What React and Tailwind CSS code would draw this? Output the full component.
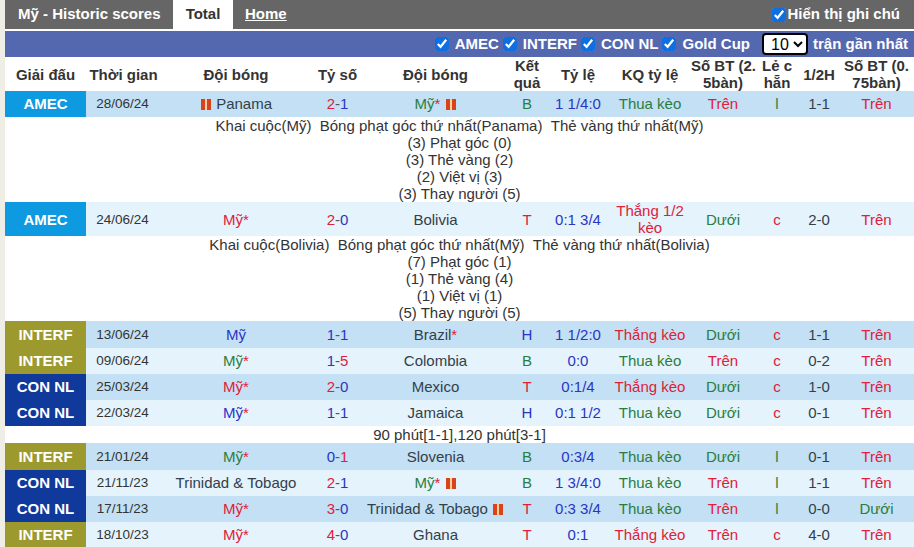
const RED = 'text-[#e0203a]';
const BLUE = 'text-[#2a35c4]';
const GREEN = 'text-[#2a7d3f]';
const DARK = 'text-[#33404a]';

const ROW26 = 'h-[26px] [&>td]:pb-[2px]';

const Card = () => (
  <span className="inline-block align-[-1px] w-[10px] h-[11px] bg-[#d9431a] relative mx-[1px]">
    <span className="absolute left-[4px] top-0 w-[2px] h-full bg-[#f9cfa0]" />
  </span>
);

const COLS = [81, 75, 150, 53, 143, 40, 62, 82, 64, 44, 40, 75];

const HEAD = [
  'Giải đấu', 'Thời gian', 'Đội bóng', 'Tỷ số', 'Đội bóng', 'Kết\nquả', 'Tỷ lệ', 'KQ tỷ lệ',
  'Số BT (2.\n5bàn)', 'Lẻ c\nhẵn', '1/2H', 'Số BT (0.\n75bàn)',
];

const LEAGUE = {
  AMEC: 'bg-[#0e9ae0]',
  INTERF: 'bg-[#9c9a2f]',
  'CON NL': 'bg-[#0f3a9b]',
};

const rows = [
  { lg: 'AMEC', date: '28/06/24', t1: 'Panama', t1c: DARK, card1: true, s: ['2', '1'], sc: [RED, BLUE], t2: 'Mỹ', star2: true, t2c: GREEN, card2: true, r: 'B', rc: GREEN, o: '1 1/4:0', k: 'Thua kèo', kc: GREEN, bt: 'Trên', btc: RED, lc: 'l', lcc: GREEN, h: '1-1', b2: 'Trên', b2c: RED, bg: 'bg-[#c3e0f4]', h_: ROW26,
    detail: ['Khai cuộc(Mỹ)\u00a0\u00a0Bóng phạt góc thứ nhất(Panama)\u00a0\u00a0Thẻ vàng thứ nhất(Mỹ)', '(3) Phạt góc (0)', '(3) Thẻ vàng (2)', '(2) Việt vị (3)', '(3) Thay người (5)'] },
  { lg: 'AMEC', date: '24/06/24', t1: 'Mỹ', star1: true, t1c: RED, s: ['2', '0'], sc: [RED, BLUE], t2: 'Bolivia', t2c: DARK, r: 'T', rc: RED, o: '0:1 3/4', k: 'Thắng 1/2 kèo', kc: RED, bt: 'Dưới', btc: GREEN, lc: 'c', lcc: RED, h: '2-0', b2: 'Trên', b2c: RED, bg: 'bg-[#e4f3fc]', h_: 'h-[34px]',
    detail: ['Khai cuộc(Bolivia)\u00a0\u00a0Bóng phạt góc thứ nhất(Mỹ)\u00a0\u00a0Thẻ vàng thứ nhất(Bolivia)', '(7) Phạt góc (1)', '(1) Thẻ vàng (4)', '(1) Việt vị (1)', '(5) Thay người (5)'] },
  { lg: 'INTERF', date: '13/06/24', t1: 'Mỹ', t1c: BLUE, s: ['1', '1'], sc: [BLUE, BLUE], t2: 'Brazil', star2: true, t2c: DARK, r: 'H', rc: BLUE, o: '1 1/2:0', k: 'Thắng kèo', kc: RED, bt: 'Dưới', btc: GREEN, lc: 'c', lcc: RED, h: '1-1', b2: 'Trên', b2c: RED, bg: 'bg-[#c3e0f4]', h_: 'h-[27px]' },
  { lg: 'INTERF', date: '09/06/24', t1: 'Mỹ', star1: true, t1c: GREEN, s: ['1', '5'], sc: [BLUE, RED], t2: 'Colombia', t2c: DARK, r: 'B', rc: GREEN, o: '0:0', k: 'Thua kèo', kc: GREEN, bt: 'Trên', btc: RED, lc: 'c', lcc: RED, h: '0-2', b2: 'Trên', b2c: RED, bg: 'bg-[#e4f3fc]', h_: ROW26 },
  { lg: 'CON NL', date: '25/03/24', t1: 'Mỹ', star1: true, t1c: RED, s: ['2', '0'], sc: [RED, BLUE], t2: 'Mexico', t2c: DARK, r: 'T', rc: RED, o: '0:1/4', k: 'Thắng kèo', kc: RED, bt: 'Dưới', btc: GREEN, lc: 'c', lcc: RED, h: '1-0', b2: 'Trên', b2c: RED, bg: 'bg-[#c3e0f4]', h_: ROW26 },
  { lg: 'CON NL', date: '22/03/24', t1: 'Mỹ', star1: true, t1c: BLUE, s: ['1', '1'], sc: [BLUE, BLUE], t2: 'Jamaica', t2c: DARK, r: 'H', rc: BLUE, o: '0:1 1/2', k: 'Thua kèo', kc: GREEN, bt: 'Dưới', btc: GREEN, lc: 'c', lcc: RED, h: '0-1', b2: 'Trên', b2c: RED, bg: 'bg-[#e4f3fc]', h_: ROW26,
    note: '90 phút[1-1],120 phút[3-1]' },
  { lg: 'INTERF', date: '21/01/24', t1: 'Mỹ', star1: true, t1c: GREEN, s: ['0', '1'], sc: [BLUE, RED], t2: 'Slovenia', t2c: DARK, r: 'B', rc: GREEN, o: '0:3/4', k: 'Thua kèo', kc: GREEN, bt: 'Dưới', btc: GREEN, lc: 'l', lcc: GREEN, h: '0-1', b2: 'Trên', b2c: RED, bg: 'bg-[#c3e0f4]', h_: 'h-[27px]' },
  { lg: 'CON NL', date: '21/11/23', t1: 'Trinidad & Tobago', t1c: DARK, s: ['2', '1'], sc: [RED, BLUE], t2: 'Mỹ', star2: true, t2c: GREEN, card2: true, r: 'B', rc: GREEN, o: '1 3/4:0', k: 'Thua kèo', kc: GREEN, bt: 'Trên', btc: RED, lc: 'l', lcc: GREEN, h: '1-1', b2: 'Trên', b2c: RED, bg: 'bg-[#e4f3fc]', h_: ROW26 },
  { lg: 'CON NL', date: '17/11/23', t1: 'Mỹ', star1: true, t1c: RED, s: ['3', '0'], sc: [RED, BLUE], t2: 'Trinidad & Tobago', t2c: DARK, card2: true, r: 'T', rc: RED, o: '0:3 3/4', k: 'Thua kèo', kc: GREEN, bt: 'Trên', btc: RED, lc: 'l', lcc: GREEN, h: '0-0', b2: 'Dưới', b2c: GREEN, bg: 'bg-[#c3e0f4]', h_: ROW26 },
  { lg: 'INTERF', date: '18/10/23', t1: 'Mỹ', star1: true, t1c: RED, s: ['4', '0'], sc: [RED, BLUE], t2: 'Ghana', t2c: DARK, r: 'T', rc: RED, o: '0:1', k: 'Thắng kèo', kc: RED, bt: 'Trên', btc: RED, lc: 'c', lcc: RED, h: '4-0', b2: 'Trên', b2c: RED, bg: 'bg-[#e4f3fc]', h_: ROW26 },
];

function Check({ label, gap = 'gap-[6px]' }) {
  return (
    <label className={`flex items-center ${gap}`}>
      <input type="checkbox" defaultChecked className="m-0 w-[14px] h-[14px] accent-[#0f6fe0]" />
      <span>{label}</span>
    </label>
  );
}

function Row({ m }) {
  return (
    <>
      <tr className={`${m.bg} ${m.h_} text-[15px] leading-[17px] text-center`}>
        <td className={`${LEAGUE[m.lg]} text-white font-bold`}>{m.lg}</td>
        <td className="text-[13.5px] text-[#333] pr-[2px]">{m.date}</td>
        <td className={m.t1c}>
          {m.card1 && <><Card />{' '}</>}{m.t1}{m.star1 && <span className={RED}>*</span>}
        </td>
        <td>
          <span className={m.sc[0]}>{m.s[0]}</span><span className="text-[#555]">-</span><span className={m.sc[1]}>{m.s[1]}</span>
        </td>
        <td className={m.t2c}>
          {m.t2}{m.star2 && <span className={RED}>*</span>}{m.card2 && <>{' '}<Card /></>}
        </td>
        <td className={m.rc}>{m.r}</td>
        <td className={BLUE}>{m.o}</td>
        <td className={m.kc}>{m.k}</td>
        <td className={m.btc}>{m.bt}</td>
        <td className={m.lcc}>{m.lc}</td>
        <td className={DARK}>{m.h}</td>
        <td className={m.b2c}>{m.b2}</td>
      </tr>
      {m.detail && (
        <tr className="bg-white">
          <td colSpan={12} className="text-center text-[15px] leading-[17px] text-[#333]">
            {m.detail.map((d) => <div key={d}>{d}</div>)}
          </td>
        </tr>
      )}
      {m.note && (
        <tr className="bg-white">
          <td colSpan={12} className="text-center text-[15px] leading-[17px] text-[#333]">{m.note}</td>
        </tr>
      )}
    </>
  );
}

export default function App() {
  return (
    <div className="w-[914px] h-[547px] overflow-hidden bg-[#eeeee6] pl-[5px] font-['Liberation_Sans',Arial,sans-serif]">
      <div className="h-full bg-white">
        <div className="h-[29px] bg-[#666666] flex items-stretch text-[15px] font-bold text-white">
          <div className="w-[168px] flex items-center pl-[13px]">Mỹ - Historic scores</div>
          <div className="w-[60px] bg-white text-[#333] flex items-center justify-center">Total</div>
          <div className="flex items-center pl-[12px] underline">Home</div>
          <div className="ml-auto pr-[14px] flex items-center">
            <Check label="Hiển thị ghi chú" gap="gap-[2px]" />
          </div>
        </div>
        <div className="h-[26px] mt-[2px] bg-[#5468b0] flex items-center justify-end pr-[6px] text-[15px] font-bold text-white gap-[4px]">
          <Check label="AMEC" />
          <Check label="INTERF" />
          <Check label="CON NL" />
          <Check label="Gold Cup" />
          <select defaultValue="10" className="ml-[8px] w-[46px] h-[22px] bg-white text-black font-normal text-[16px] border-2 border-black rounded-[4px] pl-[3px]">
            <option value="10">10</option>
          </select>
          <span className="ml-[1px]">trận gần nhất</span>
        </div>
        <table className="w-[909px] table-fixed border-collapse">
          <colgroup>
            {COLS.map((w, i) => <col key={i} style={{ width: w }} />)}
          </colgroup>
          <thead>
            <tr className="h-[34px] text-[15px] leading-[17px] font-bold text-[#333] text-center">
              {HEAD.map((h, i) => (
                <th key={i} className="font-bold p-0 whitespace-pre">{h}</th>
              ))}
            </tr>
          </thead>
          <tbody>
            {rows.map((m) => <Row key={m.date} m={m} />)}
          </tbody>
        </table>
      </div>
    </div>
  );
}
